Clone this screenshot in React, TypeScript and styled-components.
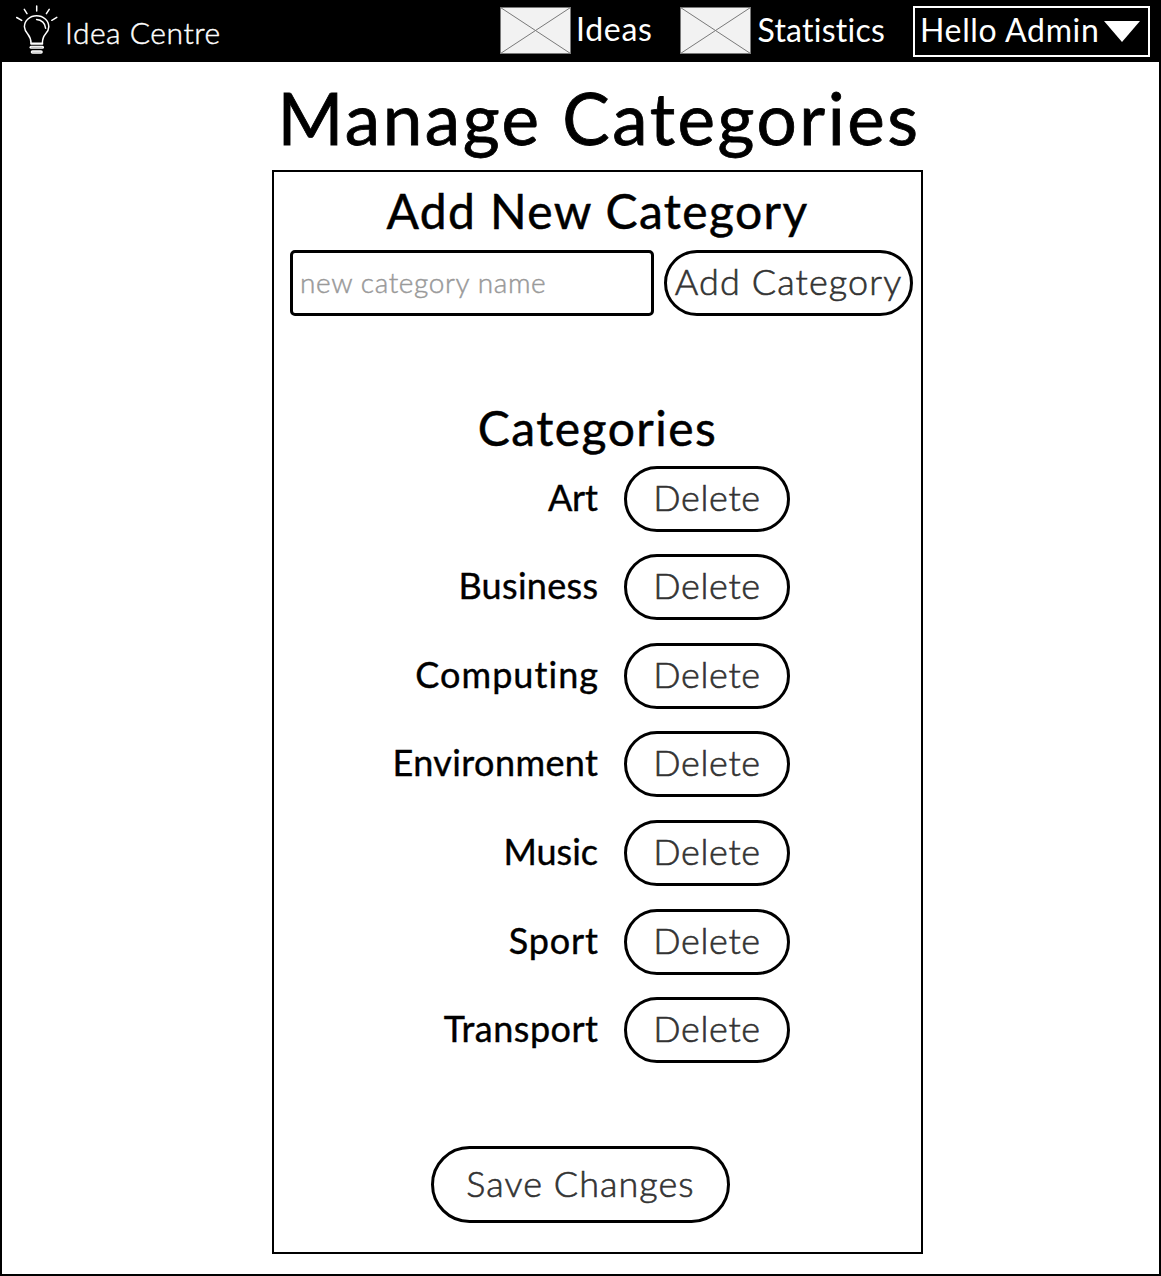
import React from "react";
import styled, { createGlobalStyle } from "styled-components";

const GlobalStyle = createGlobalStyle`
  *, *::before, *::after { box-sizing: border-box; }
  body {
    margin: 0;
    background: #fff;
    color: #000;
    font-family: "Lato", "Open Sans", sans-serif;
  }
  h1, h2, ul { margin: 0; padding: 0; font-weight: 400; }
  button, input { font-family: inherit; margin: 0; }
`;

const Page = styled.div`
  width: 1161px;
  height: 1276px;
  border: 2px solid #000;
  background: #fff;
  display: flex;
  flex-direction: column;
  align-items: center;
`;

const Header = styled.header`
  align-self: stretch;
  flex: none;
  height: 60px;
  padding: 0 9px 0 12px;
  background: #000;
  color: #fff;
  display: flex;
  align-items: flex-start;
`;

const Brand = styled.a`
  display: flex;
  align-items: flex-start;
  gap: 7px;
  font-size: 30px;
  font-weight: 300;
  line-height: 36px;
  letter-spacing: 0.53px;
  -webkit-text-stroke: 0.45px #fff;

  svg { flex: none; }
  span { margin-top: 12px; white-space: nowrap; }
`;

const Nav = styled.nav`
  margin-left: auto;
  display: flex;
  align-items: flex-start;
  font-size: 32px;
  line-height: 39px;
  white-space: nowrap;
`;

const NavItem = styled.a<{ $width: number; $gap: number; $tracking: number; $drop: number }>`
  width: ${(p) => p.$width}px;
  padding-top: 5px;
  display: flex;
  align-items: flex-start;
  gap: ${(p) => p.$gap}px;
  letter-spacing: ${(p) => p.$tracking}px;

  span { margin-top: ${(p) => p.$drop}px; }
`;

const AccountMenu = styled.button`
  width: 237px;
  height: 51px;
  margin-top: 4px;
  padding: 0 8px 3px 5px;
  border: 2px solid #fff;
  background: #000;
  color: #fff;
  display: flex;
  align-items: center;
  justify-content: space-between;
  font-size: 32px;
  line-height: 38px;
  letter-spacing: 0.65px;

  svg { position: relative; top: 1px; }
`;

const Title = styled.h1`
  margin: 16px 0 0 37px;
  font-size: 71px;
  line-height: 79px;
  letter-spacing: 2.55px;
  -webkit-text-stroke: 0.8px #000;
  white-space: nowrap;
`;

const Card = styled.main`
  width: 651px;
  height: 1084px;
  margin: 13px 0 0 34px;
  padding-top: 10px;
  border: 2px solid #000;
  display: flex;
  flex-direction: column;
`;

const Heading = styled.h2<{ $tracking: number }>`
  font-size: 48px;
  line-height: 57px;
  text-align: center;
  letter-spacing: ${(p) => p.$tracking}px;
  -webkit-text-stroke: 0.5px #000;
`;

const AddForm = styled.form`
  margin: 11px 0 83px;
  padding: 0 8px 0 16px;
  display: flex;
  gap: 10px;
`;

const NameInput = styled.input`
  width: 364px;
  height: 66px;
  padding: 0 7px 2px 7px;
  border: 3px solid #000;
  border-radius: 5px;
  background: #fff;
  font-size: 28px;
  font-weight: 300;
  letter-spacing: 0.62px;
  outline: none;

  &::placeholder {
    color: #999;
    opacity: 1;
    -webkit-text-stroke: 0.45px #999;
  }
`;

const PillButton = styled.button<{
  $width: number;
  $height?: number;
  $radius?: number;
  $tracking: number;
}>`
  flex: none;
  width: ${(p) => p.$width}px;
  height: ${(p) => p.$height ?? 66}px;
  padding: 0 0 4px;
  border: 3px solid #000;
  border-radius: ${(p) => p.$radius ?? 33}px;
  background: #fff;
  color: #333;
  font-size: 36px;
  font-weight: 300;
  line-height: 44px;
  letter-spacing: ${(p) => p.$tracking}px;
  -webkit-text-stroke: 0.6px #333;
  white-space: nowrap;
`;

const CategoryList = styled.ul`
  margin-top: 9.7px;
  list-style: none;
  display: flex;
  flex-direction: column;
  gap: 22.57px;
`;

const CategoryRow = styled.li`
  height: 66px;
  display: grid;
  grid-template-columns: 324px 166px;
  column-gap: 26px;
  align-items: center;
`;

const CategoryName = styled.span<{ $tracking: number }>`
  padding-bottom: 4px;
  text-align: right;
  font-size: 36px;
  line-height: 44px;
  letter-spacing: ${(p) => p.$tracking}px;
  margin-right: ${(p) => -p.$tracking}px;
  -webkit-text-stroke: 0.4px #000;
`;

const Footer = styled.footer`
  margin-top: 83px;
  padding-left: 157px;
  display: flex;
`;

const categories = [
  { name: "Art", tracking: -0.1 },
  { name: "Business", tracking: 0.3 },
  { name: "Computing", tracking: 1.05 },
  { name: "Environment", tracking: 0.4 },
  { name: "Music", tracking: 0 },
  { name: "Sport", tracking: 0.9 },
  { name: "Transport", tracking: 0.5 },
];

const Bulb = () => (
  <svg width="44" height="56" viewBox="14 2 44 56" fill="none" stroke="#fff" strokeWidth="1.5" strokeLinecap="round">
    <path d="M36.7 6v5M24.3 9.4l2.7 4.3M16.7 17.5l5 2.9M49.2 9.4l-2.8 4.3M56.8 17.4l-5 2.9" />
    <path d="M31 43.2c0-5-1.2-6.500-3.300-9.200a12.200 12.200 0 0 1-3.300-7.300c0-6 5.400-11 12.200-11s12.200 5 12.200 11c0 2.800-1.300 5.200-3.300 7.300-2.300 2.700-3.100 4.200-3.100 9.200z" />
    <path d="M36.600 19.500c4.900.2 8.800 3.900 9 8.700" />
    <path d="M31 44h11.500" />
    <path d="M31 47.300h11.500" strokeWidth="3" />
    <path d="M31.500 47.300h10.500" stroke="#aaa" strokeWidth=".8" />
    <path d="M32.500 52h8.500" strokeWidth="3.600" />
    <path d="M32.500 52.200h8.500" stroke="#bbb" strokeWidth=".9" />
  </svg>
);

const ImagePlaceholder = () => (
  <svg width="71" height="47" viewBox="0 0 71 47">
    <rect x=".5" y=".5" width="70" height="46" fill="#f2f2f2" stroke="#797979" />
    <path d="M.5.500l70 46M70.500.500l-70 46" stroke="#797979" />
  </svg>
);

const Caret = () => (
  <svg width="36" height="22" viewBox="0 0 36 22">
    <path d="M0 1h36L18 22z" fill="#fff" />
  </svg>
);

export default function App() {
  return (
    <>
      <GlobalStyle />
      <Page>
        <Header>
          <Brand>
            <Bulb />
            <span>Idea Centre</span>
          </Brand>
          <Nav>
            <NavItem $width={180} $gap={5} $tracking={0.7} $drop={2}>
              <ImagePlaceholder />
              <span>Ideas</span>
            </NavItem>
            <NavItem $width={233} $gap={6.5} $tracking={0.25} $drop={3}>
              <ImagePlaceholder />
              <span>Statistics</span>
            </NavItem>
            <AccountMenu>
              <span>Hello Admin</span>
              <Caret />
            </AccountMenu>
          </Nav>
        </Header>
        <Title>Manage Categories</Title>
        <Card>
          <Heading $tracking={1.38}>Add New Category</Heading>
          <AddForm onSubmit={(e) => e.preventDefault()}>
            <NameInput placeholder="new category name" />
            <PillButton $width={249} $tracking={1.12}>Add Category</PillButton>
          </AddForm>
          <Heading $tracking={1.45}>Categories</Heading>
          <CategoryList>
            {categories.map((c) => (
              <CategoryRow key={c.name}>
                <CategoryName $tracking={c.tracking}>{c.name}</CategoryName>
                <PillButton $width={166} $tracking={0.65}>Delete</PillButton>
              </CategoryRow>
            ))}
          </CategoryList>
          <Footer>
            <PillButton $width={299} $height={77} $radius={39} $tracking={1.04}>
              Save Changes
            </PillButton>
          </Footer>
        </Card>
      </Page>
    </>
  );
}
